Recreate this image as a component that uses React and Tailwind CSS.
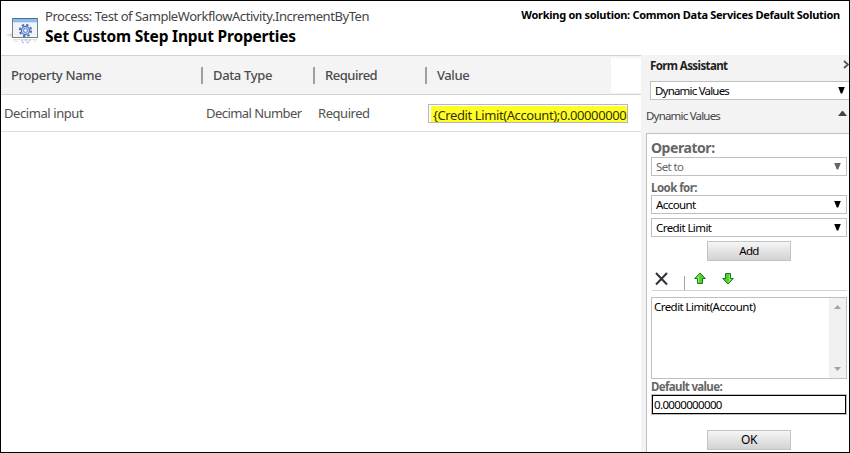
import React from "react";

function Caret({ className = "text-black" }) {
  return (
    <svg width="7" height="8" viewBox="0 0 7 8" className={`-mt-0.5 shrink-0 ${className}`}>
      <path d="M0.2 1H6.8L4.2 7.5H2.8Z" fill="currentColor" />
    </svg>
  );
}

function Select({ label, className = "", labelClass = "", caret }) {
  return (
    <div className={`flex h-[19px] items-center justify-between border border-[#c0c0c0] bg-white pl-1 ${className}`}>
      <span className={`text-[11.5px] leading-[17px] ${labelClass}`}>{label}</span>
      <Caret className={caret} />
    </div>
  );
}

function Button({ label, labelClass }) {
  return (
    <button className="ml-[56px] flex h-5 w-[84px] items-center justify-center border border-[#c3c3c3] bg-linear-to-b from-[#f6f6f6] to-[#d2d2d2] text-black">
      <span className={`leading-4 ${labelClass}`}>{label}</span>
    </button>
  );
}

function ProcessIcon() {
  return (
    <svg width="34" height="28" viewBox="0 0 34 28" className="shrink-0">
      <path d="M0 18L6 16V20Z" fill="#d9dcde" />
      <rect x="6.5" y="1.5" width="25" height="19" fill="#f1f3f6" stroke="#6f8489" />
      <rect x="7" y="1" width="24" height="1" fill="#4b7390" />
      <rect x="7" y="2" width="24" height="3" fill="#8dbbed" />
      <rect x="7" y="5" width="24" height="1" fill="#d3e3f5" />
      <path d="M7 22.5H31" stroke="#dfe2e4" strokeWidth="1" />
      <path d="M7 24H12M27 24H31" stroke="#f0f1f3" strokeWidth="2" />
      <circle cx="19.5" cy="13.5" r="5.7" fill="none" stroke="#4a6caf" strokeWidth="1.8" strokeDasharray="2.4 2.077" />
      <circle cx="19.5" cy="13.5" r="4.1" fill="#b9d3f5" stroke="#4c74be" strokeWidth="1.2" />
      <circle cx="19.5" cy="13.5" r="1.9" fill="#fff" stroke="#5579b7" />
      <path d="M15 23.5H17M18.5 23H21M22.5 23.5H24.5M16 25.5H18M20 25.5H23" stroke="#b9c8e2" strokeWidth="1.4" />
    </svg>
  );
}

function GreenArrow({ down }) {
  return (
    <svg width="12" height="13" viewBox="0 0 12 13" className={down ? "rotate-180" : ""}>
      <path d="M6 1L11.3 6.5H8.5V11.5H3.5V6.5H0.7Z" fill="#49d32c" stroke="#177b16" strokeLinejoin="round" />
      <path d="M6 2.5L3.2 5.5H4.6V10.5" fill="none" stroke="#a0f080" />
    </svg>
  );
}

export default function App() {
  return (
    <div className="flex h-[453px] w-[850px] flex-col overflow-hidden border border-black bg-white font-['Noto_Sans','Open_Sans',sans-serif] whitespace-nowrap text-black">
      <header className="flex h-[54px] shrink-0">
        <div className="pt-4 pl-[5px]"><ProcessIcon /></div>
        <div className="pt-1.5 pl-[5px]">
          <div className="text-[13px] leading-[18px] tracking-[-0.43px] text-[#444]">Process: Test of SampleWorkflowActivity.IncrementByTen</div>
          <h1 className="mt-px text-[15.5px] leading-5 font-bold tracking-[-0.2px]">Set Custom Step Input Properties</h1>
        </div>
        <div className="ml-auto pt-1.5 pr-[9px] text-[11px] leading-4 font-bold tracking-[-0.28px]">Working on solution: Common Data Services Default Solution</div>
      </header>

      <div className="flex min-h-0 flex-1">
        <main className="w-[640px] shrink-0">
          <div className="flex h-10 items-center border-y border-[#d3d3d3] bg-[#f4f4f4] text-[13px] font-medium text-[#4c4c4c]">
            <div className="w-[200px] pt-0.5 pl-2.5 tracking-[-0.33px]">Property Name</div>
            <div className="flex h-[17px] w-[112px] items-center border-l-2 border-[#a0a0a0] pt-0.5 pl-2.5 tracking-[-0.35px]">Data Type</div>
            <div className="flex h-[17px] w-[112px] items-center border-l-2 border-[#a0a0a0] pt-0.5 pl-2.5 tracking-[-0.5px]">Required</div>
            <div className="flex h-[17px] flex-1 items-center border-l-2 border-[#a0a0a0] pt-0.5 pl-2.5 tracking-[-0.4px]">Value</div>
            <div className="h-[35px] w-[30px] bg-white" />
          </div>
          <div className="flex h-[37px] items-center border-b border-[#dedede] text-[13px] text-[#505050]">
            <div className="w-[205px] pt-0.5 pl-[3px] tracking-[-0.42px]">Decimal input</div>
            <div className="w-[112px] pt-0.5 tracking-[-0.55px]">Decimal Number</div>
            <div className="w-[110px] pt-0.5 tracking-[-0.45px]">Required</div>
            <div className="flex h-[19px] w-[200px] items-end border border-[#b7b7b7] bg-white pt-px pl-0.5">
              <div className="h-4 w-full bg-[#ffff26] pl-0.5 text-[13px] leading-[19px] tracking-[-0.4px] text-[#333300]">{"{Credit Limit(Account);0.00000000"}</div>
            </div>
          </div>
        </main>

        <aside className="flex min-w-0 flex-1 flex-col bg-[#f3f3f3] pl-[5px]">
          <div className="flex h-[26px] shrink-0 items-start justify-between pt-0.5 pl-1">
            <span className="text-[11.5px] leading-[18px] font-bold tracking-[-0.6px] text-[#222]">Form Assistant</span>
            <svg width="6" height="9" viewBox="0 0 6 9" className="mt-[3px]"><path d="M1 1L5 4.5L1 8" fill="none" stroke="#555" strokeWidth="1.8" /></svg>
          </div>
          <Select label="Dynamic Values" className="ml-1 shrink-0 border-r-0 pr-1" labelClass="tracking-[-0.8px]" />
          <div className="flex h-[33px] shrink-0 items-center justify-between pr-0.5 pb-0.5">
            <span className="text-[11.5px] leading-4 tracking-[-0.8px] text-[#444]">Dynamic Values</span>
            <svg width="9" height="5" viewBox="0 0 9 5" className="-mt-1"><path d="M0 5L4 0H5L9 5Z" fill="#444" /></svg>
          </div>
          <section className="flex min-h-0 flex-1 flex-col border-t border-l border-[#c0c0c0] bg-white pr-0.5 pl-1">
            <div className="h-[23px] shrink-0 pt-[5px] text-[14px] leading-[18px] font-bold tracking-[-0.45px] text-[#666]">Operator:</div>
            <Select label="Set to" className="pr-[5px]" labelClass="tracking-[-0.6px] text-[#666]" caret="text-[#666]" />
            <div className="flex h-[19px] shrink-0 items-center pt-1 text-[11.5px] leading-[14px] font-bold tracking-[-0.55px] text-[#666]">Look for:</div>
            <Select label="Account" className="pr-[5px]" labelClass="tracking-[-0.58px]" />
            <Select label="Credit Limit" className="mt-1 pr-[5px]" labelClass="tracking-[-0.58px]" />
            <div className="mt-1 shrink-0"><Button label="Add" labelClass="text-[11.5px] tracking-[-0.6px]" /></div>
            <div className="ml-px flex h-[30px] shrink-0 border-b border-[#d3d3d3] pt-[11px] pl-[3px]">
              <svg width="13" height="14" viewBox="0 0 13 14"><path d="M1 1L12 12.5M12 1L1 12.5" fill="none" stroke="#303038" strokeWidth="2" /></svg>
              <div className="mt-1 ml-4 h-3.5 w-px bg-[#9ca3b2]" />
              <div className="ml-[9px]"><GreenArrow /></div>
              <div className="ml-4"><GreenArrow down /></div>
            </div>
            <div className="mt-1.5 flex h-[82px] shrink-0 border border-[#c0c0c0]">
              <div className="flex-1 pl-0.5 text-[11.5px] leading-[18px] tracking-[-0.55px]">Credit Limit(Account)</div>
              <div className="flex w-[17px] flex-col items-center justify-between bg-[#f1f1f1] pt-[7px] pb-[7px]">
                <svg width="7" height="4" viewBox="0 0 7 4"><path d="M0 4L3.5 0L7 4Z" fill="#a3a3a3" /></svg>
                <svg width="7" height="4" viewBox="0 0 7 4"><path d="M0 0L3.5 4L7 0Z" fill="#a3a3a3" /></svg>
              </div>
            </div>
            <div className="flex h-[15px] shrink-0 items-center pt-px text-[11.5px] leading-[14px] font-bold tracking-[-0.64px] text-[#666]">Default value:</div>
            <div className="flex h-[21px] shrink-0 border border-[#c0c0c0]">
              <div className="flex flex-1 items-center border border-black pl-px text-[11.5px] leading-4 tracking-[-0.64px]">0.0000000000</div>
            </div>
            <div className="mt-[15px] shrink-0"><Button label="OK" labelClass="text-[12px] tracking-[-0.4px]" /></div>
          </section>
        </aside>
      </div>
    </div>
  );
}
